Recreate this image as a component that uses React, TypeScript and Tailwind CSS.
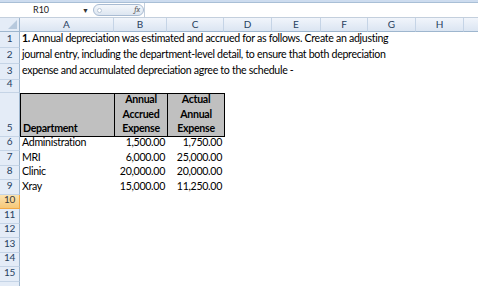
import React from "react";

const cols = [
  { label: "A", w: "w-[94px]" },
  { label: "B", w: "w-[53px]" },
  { label: "C", w: "w-[57px]" },
  { label: "D", w: "w-[48px]" },
  { label: "E", w: "w-[49px]" },
  { label: "F", w: "w-[47px]" },
  { label: "G", w: "w-[48px]" },
  { label: "H", w: "w-[48px]" },
  { label: "", w: "w-[30px]" },
];

const data = [
  { n: 6, dept: "Administration", accrued: "1,500.00", actual: "1,750.00" },
  { n: 7, dept: "MRI", accrued: "6,000.00", actual: "25,000.00" },
  { n: 8, dept: "Clinic", accrued: "20,000.00", actual: "20,000.00" },
  { n: 9, dept: "Xray", accrued: "15,000.00", actual: "11,250.00" },
];

const RowHead = ({ n, h, active }: { n?: number; h: string; active?: boolean }) => (
  <div
    className={`w-[20px] shrink-0 ${h} flex items-end justify-center pb-[1px] border-r border-b text-[10px] ${
      active
        ? "bg-gradient-to-b from-[#fbe3b0] to-[#f6c878] border-[#f2a844] text-[#3b3b3b]"
        : "bg-[#e4ecf7] border-r-[#9eb6ce] border-b-[#c5d4e6] text-[#27415f]"
    }`}
  >
    {n}
  </div>
);

export default function App() {
  return (
    <div
      className="w-[478px] h-[286px] overflow-hidden bg-white text-[10px] text-black"
      style={{ fontFamily: "Lato, 'Open Sans', sans-serif" }}
    >
      {/* ribbon edge */}
      <div className="h-[3px] bg-[#cddcef] border-b border-[#a9bfd6]" />

      {/* formula bar */}
      <div className="h-[15px] flex items-center border-b border-[#c3cfdd] bg-white">
        <div className="w-[82px] pl-[33px] text-[9px] text-[#222]">R10</div>
        <div className="w-[11px] text-[7px] text-[#333] leading-none">▼</div>
        <div className="w-[51px] h-[12px] rounded-full border border-[#a8bbd2] bg-gradient-to-b from-[#f4f7fb] to-[#dde6f1] flex items-center justify-between px-[3px]">
          <span className="w-[5px] h-[5px] rounded-full border border-[#b8c6d6] bg-white" />
          <span className="italic text-[8px] text-[#555] font-serif">fx</span>
        </div>
        <div className="flex-1 h-full border-l border-[#c3cfdd]" />
      </div>

      {/* column headers */}
      <div className="flex h-[14px]">
        <div className="w-[20px] shrink-0 bg-[#e4ecf7] border-r border-b border-[#9eb6ce] relative">
          <div className="absolute right-[2px] bottom-[2px] w-0 h-0 border-l-[9px] border-l-transparent border-b-[9px] border-b-[#b7c9dd]" />
        </div>
        {cols.map((c, i) => (
          <div
            key={i}
            className={`${c.w} shrink-0 bg-gradient-to-b from-[#f1f5fb] to-[#dbe5f2] border-r border-b border-r-[#c5d4e6] border-b-[#9eb6ce] flex items-center justify-center text-[10px] text-[#27415f]`}
          >
            {c.label}
          </div>
        ))}
      </div>

      <div className="text-[10.6px] tracking-[-0.3px]">
        {/* rows 1-3 */}
        {[
          <>
            <b>1.</b> Annual depreciation was estimated and accrued for as follows. Create an adjusting
          </>,
          <>journal entry, including the department-level detail, to ensure that both depreciation</>,
          <>expense and accumulated depreciation agree to the schedule -</>,
        ].map((txt, i) => (
          <div key={i} className="flex h-[16px]">
            <RowHead n={i + 1} h="h-[16px]" />
            <div className="pl-[2px] flex items-end pb-[1px] whitespace-nowrap">
              <span>{txt}</span>
            </div>
          </div>
        ))}

        {/* row 4 */}
        <div className="flex h-[13px]">
          <RowHead n={4} h="h-[13px]" />
        </div>

        {/* row 5: header */}
        <div className="flex h-[43.5px]">
          <RowHead n={5} h="h-[43.5px]" />
          <div className="flex border border-black bg-[#c0c0c0] font-bold leading-[14.5px]">
            <div className="w-[93px] flex items-end pl-[2px]">Department</div>
            <div className="w-[53px] border-l border-black flex flex-col items-center justify-end">
              <span>Annual</span>
              <span>Accrued</span>
              <span>Expense</span>
            </div>
            <div className="w-[57px] border-l border-black flex flex-col items-center justify-end">
              <span>Actual</span>
              <span>Annual</span>
              <span>Expense</span>
            </div>
          </div>
        </div>

        {/* data rows */}
        {data.map((r) => (
          <div key={r.n} className="flex h-[14.5px]">
            <RowHead n={r.n} h="h-[14.5px]" />
            <div className="w-[94px] pl-[2px] flex items-end">{r.dept}</div>
            <div className="w-[53px] pr-[2px] flex items-end justify-end">{r.accrued}</div>
            <div className="w-[57px] pr-[2px] flex items-end justify-end">{r.actual}</div>
          </div>
        ))}

        {/* empty rows */}
        {[10, 11, 12, 13, 14, 15].map((n) => (
          <div key={n} className="flex h-[14.5px]">
            <RowHead n={n} h="h-[14.5px]" active={n === 10} />
          </div>
        ))}
        <div className="flex h-[14.5px]">
          <RowHead h="h-[14.5px]" />
        </div>
      </div>
    </div>
  );
}
